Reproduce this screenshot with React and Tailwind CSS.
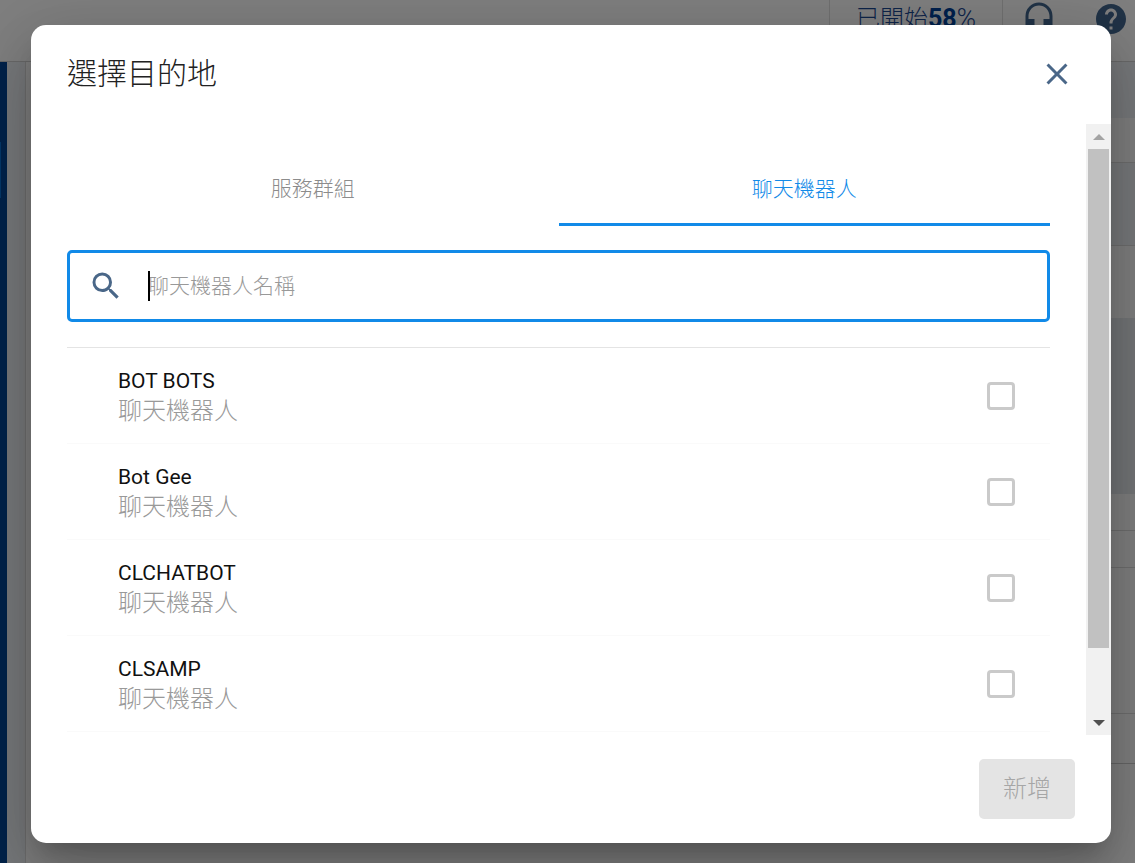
import { MdClose, MdHeadset, MdHelp, MdSearch } from "react-icons/md";

const bots = ["BOT BOTS", "Bot Gee", "CLCHATBOT", "CLSAMP"];

function PageBehind() {
  return (
    <div className="flex h-screen flex-col bg-[#eff3f7]" inert>
      <header className="flex h-[62px] shrink-0 items-start justify-end border-b border-[#d2d2d2] bg-white">
        <div className="flex h-full w-[174px] justify-center border-x border-[#e0e0e0] pt-[2px] text-[24px] leading-8 font-light text-[#1c4a94]">
          <span>
            已開始<span className="text-[25px] font-bold text-[#00429a]">58</span>
            <span className="text-[26px]">%</span>
          </span>
        </div>
        <div className="flex gap-9 pt-px pr-[6px] pl-[18px] text-[#42668f]">
          <MdHeadset size={36} />
          <MdHelp size={36} />
        </div>
      </header>
      <div className="flex min-h-0 flex-1">
        <nav className="w-[7px] bg-[#004494] pt-20">
          <div className="h-14 w-px bg-[#0a6fd0]" />
        </nav>
        <div className="w-[18px]" />
        <main className="flex flex-1 border-l border-[#dcdcdc]">
          <div className="flex-1 bg-white" />
          <div className="flex w-40 flex-col">
            <div className="h-14 shrink-0 bg-[#eff3f7]" />
            <div className="h-[45px] shrink-0 border-b border-[#dcdcdc] bg-white" />
            <div className="h-[83px] shrink-0 border-b border-[#dcdcdc] bg-[#eff3f7]" />
            <div className="h-[72px] shrink-0 bg-white" />
            <div className="h-44 shrink-0 bg-[#e6eaef]" />
            <div className="h-[37px] shrink-0 border-b border-[#dcdcdc] bg-white" />
            <div className="h-[37px] shrink-0 border-b border-[#dcdcdc] bg-white" />
            <div className="h-[146px] shrink-0 border-b border-[#dcdcdc] bg-white" />
            <div className="h-[50px] shrink-0 border-b border-[#cccccc] bg-white" />
            <div className="flex-1 bg-white" />
          </div>
        </main>
      </div>
    </div>
  );
}

function Scrollbar() {
  return (
    <div className="flex w-[25px] shrink-0 flex-col bg-[#f1f1f1]" aria-hidden="true">
      <div className="flex h-[25px] items-center justify-center">
        <svg width="12" height="6" viewBox="0 0 12 6">
          <path d="M6 0L12 6H0Z" fill="#a3a3a3" />
        </svg>
      </div>
      <div className="flex-1 px-[2px]">
        <div className="h-[89%] bg-[#c1c1c1]" />
      </div>
      <div className="flex h-[25px] items-center justify-center">
        <svg width="12" height="6" viewBox="0 0 12 6">
          <path d="M6 6L0 0H12Z" fill="#505050" />
        </svg>
      </div>
    </div>
  );
}

function BotRow({ name, id }) {
  return (
    <li className="flex h-24 items-center justify-between border-b border-[#fafafa] pr-[35px] pl-[51px]">
      <label htmlFor={id} className="flex flex-col">
        <span className="text-[21px] leading-[30px] text-[#111]">{name}</span>
        <span className="text-[24px] leading-[30px] font-light text-[#999]">聊天機器人</span>
      </label>
      <input
        id={id}
        type="checkbox"
        className="size-7 appearance-none rounded-[4px] border-3 border-[#cacaca] bg-white checked:bg-[#118ae8]"
      />
    </li>
  );
}

export default function App() {
  return (
    <div className="relative h-screen overflow-hidden font-['Roboto','Noto_Sans_CJK_TC',sans-serif]">
      <PageBehind />
      <div className="absolute inset-0 flex bg-black/50 pt-[25px] pr-6 pb-5 pl-[31px]">
        <section
          role="dialog"
          aria-modal="true"
          aria-labelledby="dialog-title"
          className="flex min-w-0 flex-1 flex-col rounded-[15px] bg-white shadow-[0_16px_22px_-10px_rgba(0,0,0,0.2),0_36px_57px_4px_rgba(0,0,0,0.14),0_13px_69px_12px_rgba(0,0,0,0.12)]"
        >
          <header className="flex h-[98px] shrink-0 items-center justify-between px-9">
            <h1 id="dialog-title" className="text-[30px] leading-10 font-light text-[#222]">
              選擇目的地
            </h1>
            <button type="button" aria-label="關閉" className="text-[#4a6788]">
              <MdClose size={36} />
            </button>
          </header>

          <div className="mt-px flex min-h-0 flex-1">
            <div className="min-w-0 flex-1 overflow-hidden px-9 pt-[30px]">
              <div role="tablist" className="grid grid-cols-2 text-[21px] font-light">
                <button
                  role="tab"
                  type="button"
                  aria-selected="false"
                  className="h-[72px] border-b-3 border-transparent pt-[2px] text-[#8c8c8c]"
                >
                  服務群組
                </button>
                <button
                  role="tab"
                  type="button"
                  aria-selected="true"
                  className="h-[72px] border-b-3 border-[#118ae8] pt-[2px] text-[#118ae8]"
                >
                  聊天機器人
                </button>
              </div>

              <div className="mt-6 flex h-[72px] items-center rounded-[5px] border-3 border-[#118ae8] pr-4 pl-[18px]">
                <MdSearch size={36} className="shrink-0 text-[#4a6788]" />
                <div className="relative ml-6 flex-1">
                  <input
                    type="text"
                    aria-label="聊天機器人名稱"
                    placeholder="聊天機器人名稱"
                    className="block w-full text-[21px] leading-[30px] font-light text-[#222] outline-none placeholder:text-[#999]"
                  />
                  <span className="absolute inset-y-0 left-0 w-[2px] bg-black" />
                </div>
              </div>

              <ul className="mt-[25px] border-t border-[#e4e4e4]">
                {bots.map((name, i) => (
                  <BotRow key={name} name={name} id={`bot-${i}`} />
                ))}
              </ul>
            </div>
            <Scrollbar />
          </div>

          <footer className="flex h-[108px] shrink-0 items-center justify-end px-9">
            <button
              type="button"
              disabled
              className="h-[60px] rounded-[5px] bg-[#e4e4e4] px-6 text-[24px] font-light text-[#a6a6a6]"
            >
              新增
            </button>
          </footer>
        </section>
      </div>
    </div>
  );
}
